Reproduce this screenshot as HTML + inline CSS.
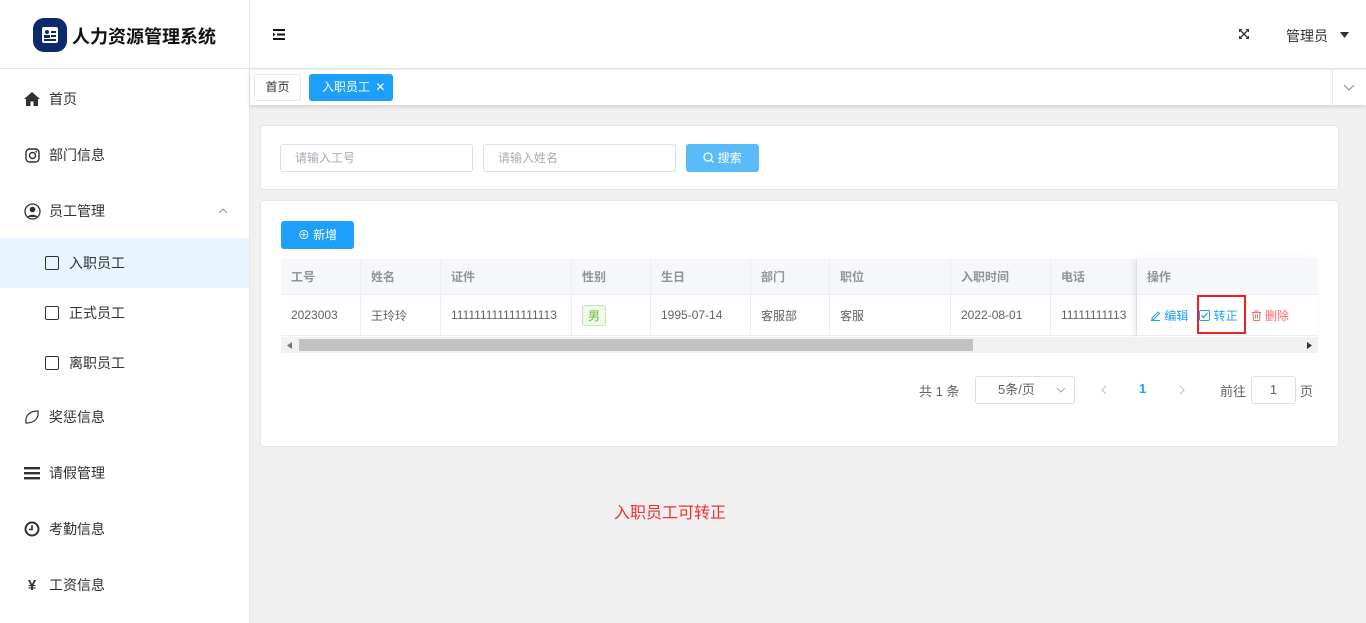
<!DOCTYPE html>
<html><head><meta charset="utf-8"><style>
*{box-sizing:border-box;margin:0;padding:0}
body{width:1366px;height:623px;overflow:hidden;font-family:"Liberation Sans","Noto Sans CJK SC",sans-serif;background:#f0f0f0;position:relative;font-size:13px;color:#606266}
.abs{position:absolute}
.side{left:0;top:0;width:250px;height:623px;background:#fff;border-right:1px solid #e6e6e6}
.logo{left:0;top:0;width:249px;height:69px;border-bottom:1px solid #e6e6e6}
.mi{position:absolute;left:0;width:249px;height:50px;display:flex;align-items:center;font-size:14px;color:#303133}
.mi .ic{width:18px;margin-left:23px;margin-right:8px;text-align:center;display:flex;justify-content:center}
.hdr{left:250px;top:0;width:1116px;height:69px;background:#fff;border-bottom:1px solid #e6e6e6}
.tabs{left:250px;top:70px;width:1116px;height:35px;background:#fff;box-shadow:0 2px 4px rgba(0,0,0,.12)}
.card{background:#fff;border:1px solid #e6e6e6;border-radius:4px}
.inp{position:absolute;height:28px;border:1px solid #dcdfe6;border-radius:3px;font-size:12px;color:#a8abb2;padding-left:14px;line-height:26px;background:#fff}
.th,.td{position:absolute;font-size:12px;display:flex;align-items:center;padding-left:10px;border-right:1px solid #ebeef5}
.th{top:259px;height:36px;background:#f5f7fa;color:#909399;font-weight:bold;border-bottom:1px solid #ebeef5}
.td{top:295px;height:41px;color:#606266;border-bottom:1px solid #ebeef5}
</style></head><body>
<div class="abs side"></div>
<div class="abs logo">
 <div class="abs" style="left:33px;top:18px;width:34px;height:34px;background:#0d2a6e;border-radius:11px"></div>
 <div class="abs" style="left:42px;top:27px;width:16px;height:16px;background:#fff;border-radius:2px"><div style="position:absolute;left:3px;top:3px;width:4px;height:4px;background:#0d2a6e;border-radius:2px"></div><div style="position:absolute;left:2px;top:8px;width:6px;height:3px;background:#0d2a6e"></div><div style="position:absolute;left:9px;top:4px;width:5px;height:1.5px;background:#0d2a6e"></div><div style="position:absolute;left:9px;top:8px;width:5px;height:1.5px;background:#0d2a6e"></div><div style="position:absolute;left:2px;top:12px;width:12px;height:1.5px;background:#0d2a6e"></div></div>
 <div class="abs" style="left:72px;top:23px;font-size:18px;font-weight:bold;color:#111">人力资源管理系统</div>
</div>
<div class="mi" style="top:74px"><span class="ic"><svg width="16" height="14" viewBox="0 0 16 14"><path d="M8 0L0 7h2v7h4.5V9.5h3V14H14V7h2Z" fill="#303133"/></svg></span>首页</div>
<div class="mi" style="top:130px"><span class="ic"><svg width="15" height="15" viewBox="0 0 15 15"><rect x="1" y="1" width="13" height="13" rx="3.5" fill="none" stroke="#303133" stroke-width="1.4"/><circle cx="7.5" cy="7.5" r="3" fill="none" stroke="#303133" stroke-width="1.4"/><circle cx="11.2" cy="3.8" r=".9" fill="#303133"/></svg></span>部门信息</div>
<div class="mi" style="top:186px"><span class="ic"><svg width="17" height="17" viewBox="0 0 17 17"><circle cx="8.5" cy="8.5" r="7.5" fill="none" stroke="#303133" stroke-width="1.3"/><circle cx="8.5" cy="6.5" r="2.8" fill="#303133"/><path d="M3.5 14c1-3 9-3 10 0" fill="#303133"/></svg></span>员工管理<svg style="position:absolute;left:218px;top:22px" width="10" height="6" viewBox="0 0 10 6"><path d="M1 5L5 1 9 5" fill="none" stroke="#909399" stroke-width="1"/></svg></div>
<div class="mi" style="top:238px;background:#e8f4ff"><span style="margin-left:45px;width:14px;height:14px;border:1.5px solid #303133;border-radius:2px;margin-right:10px"></span>入职员工</div>
<div class="mi" style="top:288px"><span style="margin-left:45px;width:14px;height:14px;border:1.5px solid #303133;border-radius:2px;margin-right:10px"></span>正式员工</div>
<div class="mi" style="top:338px"><span style="margin-left:45px;width:14px;height:14px;border:1.5px solid #303133;border-radius:2px;margin-right:10px"></span>离职员工</div>
<div class="mi" style="top:392px"><span class="ic"><svg width="16" height="16" viewBox="0 0 16 16"><path d="M2 14C1 7 5 2 14 2C15 9 11 14 2 14Z" fill="none" stroke="#303133" stroke-width="1.2"/></svg></span>奖惩信息</div>
<div class="mi" style="top:448px"><span class="ic"><svg width="16" height="14" viewBox="0 0 16 14"><rect y="1" width="16" height="2.4" fill="#303133"/><rect y="6" width="16" height="2.4" fill="#303133"/><rect y="11" width="16" height="2.4" fill="#303133"/></svg></span>请假管理</div>
<div class="mi" style="top:504px"><span class="ic"><svg width="16" height="16" viewBox="0 0 16 16"><circle cx="8" cy="8" r="6.5" fill="none" stroke="#303133" stroke-width="2"/><path d="M8 4v4.5H5" fill="none" stroke="#303133" stroke-width="1.6"/></svg></span>考勤信息</div>
<div class="mi" style="top:560px"><span class="ic" style="font-weight:bold;font-size:15px">¥</span>工资信息</div>

<div class="abs hdr">
 <svg class="abs" style="left:23px;top:29px" width="12" height="11" viewBox="0 0 12 11"><rect x="0" y="0" width="12" height="2" fill="#111"/><rect x="4" y="4.5" width="8" height="2" fill="#111"/><rect x="0" y="9" width="12" height="2" fill="#111"/><path d="M0 3.5L2.5 5.5 0 7.5Z" fill="#111"/></svg>
 <svg class="abs" style="left:988px;top:28px" width="12" height="12" viewBox="0 0 12 12"><path d="M2 2L10 10M10 2L2 10" stroke="#333" stroke-width="1.3"/><path d="M1 1h3.5L1 4.5ZM11 1H7.5L11 4.5ZM1 11h3.5L1 7.5ZM11 11H7.5L11 7.5Z" fill="#333"/></svg>
 <div class="abs" style="left:1036px;top:26px;font-size:14px;color:#303133">管理员</div>
 <svg class="abs" style="left:1090px;top:32px" width="9" height="6" viewBox="0 0 9 6"><path d="M0 0h9L4.5 6Z" fill="#303133"/></svg>
</div>
<div class="abs tabs">
 <div class="abs" style="left:4px;top:4px;width:47px;height:27px;border:1px solid #e4e7ed;border-radius:3px;font-size:12px;line-height:25px;text-align:center;color:#303133">首页</div>
 <div class="abs" style="left:59px;top:4px;width:84px;height:27px;background:#1ca0fa;border-radius:3px;font-size:12px;line-height:27px;color:#fff;padding-left:13px">入职员工 <span style="margin-left:2px">✕</span></div>
 <div class="abs" style="left:1082px;top:0;width:34px;height:35px;border-left:1px solid #e6e6e6"></div>
 <svg class="abs" style="left:1093px;top:14px" width="12" height="7" viewBox="0 0 12 7"><path d="M1 1l5 5 5-5" fill="none" stroke="#909399" stroke-width="1.2"/></svg>
</div>

<div class="abs card" style="left:260px;top:125px;width:1079px;height:65px"></div>
<div class="inp" style="left:280px;top:144px;width:193px">请输入工号</div>
<div class="inp" style="left:483px;top:144px;width:193px">请输入姓名</div>
<div class="abs" style="left:686px;top:144px;width:73px;height:28px;background:#59bcf9;border-radius:3px;color:#fff;font-size:12px;line-height:28px;text-align:center"><svg width="11" height="11" viewBox="0 0 11 11" style="vertical-align:-1px"><circle cx="5" cy="5" r="4" fill="none" stroke="#fff" stroke-width="1.3"/><path d="M8 8l2.5 2.5" stroke="#fff" stroke-width="1.3"/></svg> 搜索</div>

<div class="abs card" style="left:260px;top:200px;width:1079px;height:247px"></div>
<div class="abs" style="left:281px;top:221px;width:73px;height:28px;background:#1ca0fa;border-radius:3px;color:#fff;font-size:12px;line-height:28px;text-align:center">⊕ 新增</div>

<div class="th" style="left:281px;width:80px">工号</div><div class="th" style="left:361px;width:80px">姓名</div><div class="th" style="left:441px;width:131px">证件</div><div class="th" style="left:572px;width:79px">性别</div><div class="th" style="left:651px;width:100px">生日</div><div class="th" style="left:751px;width:79px">部门</div><div class="th" style="left:830px;width:121px">职位</div><div class="th" style="left:951px;width:100px">入职时间</div><div class="th" style="left:1051px;width:86px">电话</div>
<div class="td" style="left:281px;width:80px">2023003</div><div class="td" style="left:361px;width:80px">王玲玲</div><div class="td" style="left:441px;width:131px">111111111111111113</div><div class="td" style="left:572px;width:79px"><span style="border:1px solid #c2e7b0;background:#f0f9eb;color:#67c23a;font-size:12px;padding:1px 5px;border-radius:3px">男</span></div><div class="td" style="left:651px;width:100px">1995-07-14</div><div class="td" style="left:751px;width:79px">客服部</div><div class="td" style="left:830px;width:121px">客服</div><div class="td" style="left:951px;width:100px">2022-08-01</div><div class="td" style="left:1051px;width:86px">11111111113</div>
<div class="abs" style="left:1137px;top:259px;width:181px;height:78px;background:#fff;box-shadow:-3px 0 6px rgba(0,0,0,.08)"></div>
<div class="th" style="left:1137px;width:181px;border-right:none">操作</div>
<div class="td" style="left:1137px;width:181px;border-right:none;padding-left:13px">
<span style="color:#1ca0fa;display:flex;align-items:center"><svg width="11" height="11" viewBox="0 0 11 11"><path d="M2 8L8 2l1.5 1.5-6 6H2ZM1 10.5h9" fill="none" stroke="#1ca0fa" stroke-width="1"/></svg>&nbsp;编辑</span>
<span style="color:#1ca0fa;margin-left:11px;display:flex;align-items:center"><svg width="11" height="11" viewBox="0 0 11 11"><rect x=".5" y=".5" width="10" height="10" rx="1.5" fill="none" stroke="#1ca0fa"/><path d="M2.5 5.5l2 2 4-4.5" fill="none" stroke="#1ca0fa" stroke-width="1.3"/></svg>&nbsp;转正</span>
<span style="color:#f56c6c;margin-left:13px;display:flex;align-items:center"><svg width="11" height="11" viewBox="0 0 11 11"><path d="M1 2.5h9M4 2.5V1h3v1.5M2 2.5l.5 8h6l.5-8M4.5 4.5v4M6.5 4.5v4" fill="none" stroke="#f56c6c"/></svg>&nbsp;删除</span></div>
<div class="abs" style="left:1197px;top:295px;width:49px;height:39px;border:2px solid #f02020"></div>
<div class="abs" style="left:281px;top:337px;width:1037px;height:16px;background:#f1f1f1"></div>
<div class="abs" style="left:299px;top:339px;width:674px;height:12px;background:#c1c1c1"></div>
<svg class="abs" style="left:287px;top:342px" width="5" height="7" viewBox="0 0 5 7"><path d="M5 0v7L0 3.5Z" fill="#777"/></svg>
<svg class="abs" style="left:1307px;top:342px" width="5" height="7" viewBox="0 0 5 7"><path d="M0 0v7l5-3.5Z" fill="#333"/></svg>

<div class="abs" style="left:919px;top:381px;font-size:13px">共 1 条</div>
<div class="abs" style="left:975px;top:376px;width:100px;height:28px;border:1px solid #dcdfe6;border-radius:3px;font-size:13px;line-height:26px;padding-left:22px">5条/页</div>
<svg class="abs" style="left:1056px;top:387px" width="10" height="6" viewBox="0 0 10 6"><path d="M1 1l4 4 4-4" fill="none" stroke="#a8abb2"/></svg>
<svg class="abs" style="left:1101px;top:385px" width="6" height="10" viewBox="0 0 6 10"><path d="M5 1L1 5l4 4" fill="none" stroke="#c0c4cc" stroke-width="1.2"/></svg>
<div class="abs" style="left:1139px;top:381px;color:#1ca0fa;font-weight:bold">1</div>
<svg class="abs" style="left:1179px;top:385px" width="6" height="10" viewBox="0 0 6 10"><path d="M1 1l4 4-4 4" fill="none" stroke="#c0c4cc" stroke-width="1.2"/></svg>
<div class="abs" style="left:1220px;top:381px">前往</div>
<div class="abs" style="left:1251px;top:376px;width:45px;height:28px;border:1px solid #dcdfe6;border-radius:3px;text-align:center;line-height:26px">1</div>
<div class="abs" style="left:1300px;top:381px">页</div>

<div class="abs" style="left:614px;top:499px;font-size:16px;color:#f03030">入职员工可转正</div>
</body></html>
